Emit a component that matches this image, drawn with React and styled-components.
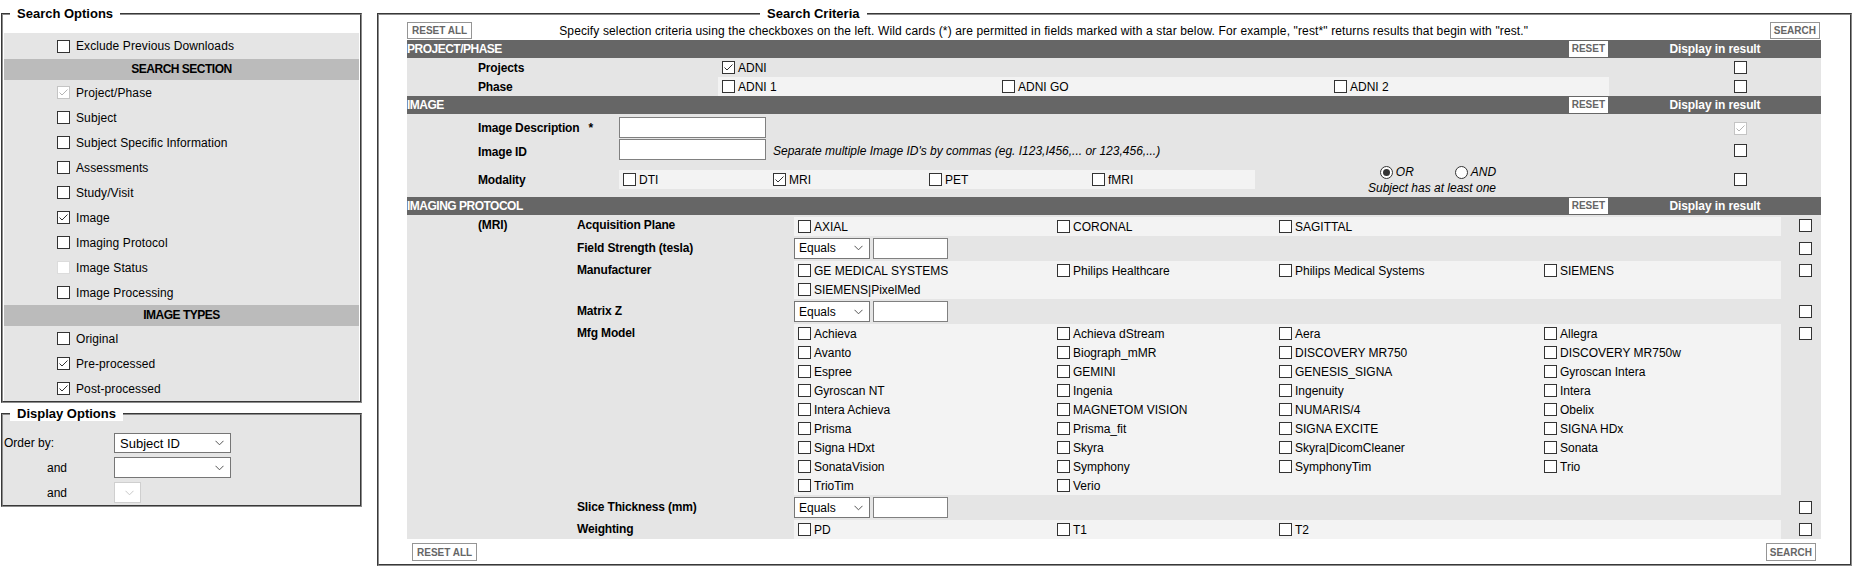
import React from "react";
import styled, { createGlobalStyle } from "styled-components";

const GlobalStyle = createGlobalStyle`
  html, body { margin: 0; padding: 0; background: #fff; }
  body {
    font-family: Arial, "Liberation Sans", sans-serif;
    font-size: 12px;
    color: #000;
  }
  * { box-sizing: border-box; }
`;

const Page = styled.div`
  display: flex;
  align-items: flex-start;
  gap: 15px;
  width: 1855px;
  padding: 6px 3px 0 1px;
`;

const LeftColumn = styled.div`
  flex: 0 0 361px;
  display: flex;
  flex-direction: column;
  gap: 3px;
`;

const Fieldset = styled.fieldset`
  margin: 0;
  min-width: 0;
  border: 2px groove #8c8c8c;
  padding: 0 1px;
  background: ${(p) => p.$bg || "#fff"};
`;

const RightFieldset = styled(Fieldset)`
  flex: 1 1 auto;
  padding: 0 29px 0 28px;
`;

const Legend = styled.legend`
  margin-left: ${(p) => p.$offset}px;
  padding: 0 7px;
  font-size: 13px;
  font-weight: bold;
  line-height: 15px;
  background: #fff;
`;

/* ---------- check boxes / radios / inputs ---------- */

const Box = styled.span`
  flex: 0 0 13px;
  width: 13px;
  height: 13px;
  display: inline-flex;
  align-items: center;
  justify-content: center;
  background: #fff;
  border: 1px solid ${(p) => (p.$disabled ? (p.$checked ? "#c4c4c4" : "#dcdcdc") : "#333")};
`;

function CheckBox({ checked, disabled }) {
  return (
    <Box $disabled={disabled} $checked={checked}>
      {checked && (
        <svg width="11" height="11" viewBox="0 0 11 11">
          <path
            d="M1.5 5.5 L4 8 L9.5 2.5"
            fill="none"
            stroke={disabled ? "#b4b4b4" : "#333"}
            strokeWidth="1"
          />
        </svg>
      )}
    </Box>
  );
}

const RadioRing = styled.span`
  width: 13px;
  height: 13px;
  border-radius: 50%;
  border: 1px solid #333;
  background: #fff;
  display: inline-flex;
  align-items: center;
  justify-content: center;
  &::after {
    content: "";
    width: 7px;
    height: 7px;
    border-radius: 50%;
    background: ${(p) => (p.$on ? "#333" : "transparent")};
  }
`;

const SelectBox = styled.div`
  width: ${(p) => p.$w}px;
  height: ${(p) => p.$h}px;
  flex: 0 0 auto;
  display: flex;
  align-items: center;
  justify-content: space-between;
  padding: 0 6px 0 ${(p) => p.$pl}px;
  background: #fff;
  border: 1px solid ${(p) => (p.$disabled ? "#cfcfcf" : "#767676")};
  font-size: ${(p) => p.$fs}px;
  color: #000;
`;

function Select({ value = "", w, h = 20, fs = 12, pl = 4, disabled }) {
  return (
    <SelectBox $w={w} $h={h} $fs={fs} $pl={pl} $disabled={disabled}>
      <span>{value}</span>
      <svg width="9" height="6" viewBox="0 0 9 6">
        <path d="M0.5 0.8 L4.5 4.8 L8.5 0.8" fill="none" stroke={disabled ? "#c8c8c8" : "#555"} strokeWidth="1" />
      </svg>
    </SelectBox>
  );
}

const TextInput = styled.div`
  width: ${(p) => p.$w}px;
  height: 21px;
  flex: 0 0 auto;
  background: #fff;
  border: 1px solid #808080;
  align-self: ${(p) => (p.$top ? "flex-start" : "auto")};
  margin-top: ${(p) => p.$mt || 0}px;
`;

/* ---------- left panel ---------- */

const OptionList = styled.div`
  margin-top: 12px;
  background: #e5e5e5;
  letter-spacing: 0.1px;
`;

const OptionRow = styled.div`
  height: ${(p) => p.$h || 25}px;
  display: flex;
  align-items: center;
  gap: 6px;
  padding-left: 53px;
`;

const GroupHeader = styled.div`
  height: 21px;
  line-height: 21px;
  background: #bbbbbb;
  text-align: center;
  font-weight: bold;
  letter-spacing: -0.5px;
`;

const DisplayGrid = styled.div`
  display: grid;
  grid-template-columns: 110px 1fr;
  grid-template-rows: 24px 25px 25px;
  align-items: center;
  padding-top: 10px;
`;

const OrderLabel = styled.span`
  padding-left: ${(p) => p.$indent || 0}px;
`;

/* ---------- right panel ---------- */

const TopBar = styled.div`
  height: 19px;
  display: flex;
  align-items: center;
`;

const Instructions = styled.span`
  margin-left: 87px;
  white-space: nowrap;
  letter-spacing: 0.13px;
`;

const Btn = styled.button`
  height: ${(p) => p.$h || 17}px;
  margin: 0;
  margin-left: ${(p) => (p.$right ? "auto" : "0")};
  margin-right: ${(p) => (p.$right ? "1px" : "0")};
  padding: 0 ${(p) => p.$px || 4}px;
  background: #fff;
  border: 1px solid #959595;
  color: #666;
  font: bold 10px Arial, "Liberation Sans", sans-serif;
  line-height: 15px;
  cursor: pointer;
`;

const Bar = styled.div`
  height: 18px;
  display: grid;
  grid-template-columns: 1fr auto 212px;
  align-items: center;
  background: #666666;
  color: #fff;
  font-weight: bold;
  font-size: 12px;
`;

const BarTitle = styled.span`
  letter-spacing: -0.5px;
`;

const BarReset = styled.span`
  height: 16px;
  line-height: 16px;
  margin-right: 1px;
  padding: 0 3px;
  background: #fff;
  color: #666;
  font-size: 10px;
  font-weight: bold;
`;

const BarDisplay = styled.span`
  text-align: center;
  letter-spacing: -0.1px;
`;

const SectionGrid = styled.div`
  display: grid;
  grid-template-columns: ${(p) => p.$cols};
  grid-template-rows: ${(p) => p.$rows};
  align-items: center;
  background: #e5e5e5;
`;

const Label = styled.span`
  font-weight: bold;
  padding-left: ${(p) => p.$indent || 0}px;
  padding-top: ${(p) => p.$pt || 0}px;
  white-space: nowrap;
  letter-spacing: -0.15px;
`;

const Star = styled.span`
  margin-left: 9px;
`;

const Cell = styled.div`
  align-self: stretch;
  display: flex;
  align-items: center;
  grid-column: ${(p) => p.$span || "auto"};
  background: ${(p) => (p.$light ? "#f3f3f3" : "transparent")};
`;

const ModalityCell = styled(Cell)`
  align-self: center;
  height: 19px;
`;

const DisplayCell = styled.div`
  display: flex;
  align-items: center;
  padding-left: ${(p) => p.$pl}px;
  margin-top: ${(p) => p.$mt || 0}px;
  height: 19px;
  align-self: ${(p) => (p.$top ? "start" : "center")};
`;

const ChoiceGrid = styled.div`
  display: grid;
  grid-template-columns: ${(p) => p.$cols};
  grid-auto-rows: 19px;
  align-items: center;
  padding-left: 4px;
  width: 100%;
`;

const Choice = styled.label`
  display: flex;
  align-items: center;
  gap: 3px;
  white-space: nowrap;
`;

const Hint = styled.span`
  margin-left: 7px;
  font-style: italic;
  white-space: nowrap;
`;

const RadioCell = styled.div`
  display: flex;
  flex-direction: column;
  align-items: center;
  font-style: italic;
  line-height: 16px;
  padding-top: 1px;
`;

const RadioLine = styled.div`
  display: flex;
  align-items: center;
  padding-left: 12px;
  gap: 41px;
`;

const RadioItem = styled.span`
  display: flex;
  align-items: center;
  gap: 3px;
`;

const ProtoRow = styled.div`
  display: grid;
  grid-template-columns: 170px 217px 987px 40px;
  height: ${(p) => p.$h}px;
  align-items: ${(p) => (p.$top ? "start" : "center")};
  background: #e5e5e5;
`;

const ProtoLabel = styled(Label)`
  line-height: 19px;
`;

const ProtoValue = styled.div`
  align-self: stretch;
  margin-top: ${(p) => p.$mt || 0}px;
  background: ${(p) => (p.$light ? "#f3f3f3" : "transparent")};
  display: flex;
  align-items: ${(p) => (p.$top ? "flex-start" : "center")};
  gap: 3px;
`;

const BottomBar = styled.div`
  height: 25px;
  display: flex;
  align-items: center;
  padding: 1px 4px 0 5px;
`;

/* ---------- data ---------- */

const searchSection = [
  { label: "Project/Phase", checked: true, disabled: true },
  { label: "Subject" },
  { label: "Subject Specific Information" },
  { label: "Assessments" },
  { label: "Study/Visit" },
  { label: "Image", checked: true },
  { label: "Imaging Protocol" },
  { label: "Image Status", disabled: true },
  { label: "Image Processing" },
];

const imageTypes = [
  { label: "Original" },
  { label: "Pre-processed", checked: true },
  { label: "Post-processed", checked: true },
];

const PROTO_COLS = "259px 222px 265px 1fr";

const manufacturers = [
  "GE MEDICAL SYSTEMS",
  "Philips Healthcare",
  "Philips Medical Systems",
  "SIEMENS",
  "SIEMENS|PixelMed",
];

const models = [
  "Achieva", "Achieva dStream", "Aera", "Allegra",
  "Avanto", "Biograph_mMR", "DISCOVERY MR750", "DISCOVERY MR750w",
  "Espree", "GEMINI", "GENESIS_SIGNA", "Gyroscan Intera",
  "Gyroscan NT", "Ingenia", "Ingenuity", "Intera",
  "Intera Achieva", "MAGNETOM VISION", "NUMARIS/4", "Obelix",
  "Prisma", "Prisma_fit", "SIGNA EXCITE", "SIGNA HDx",
  "Signa HDxt", "Skyra", "Skyra|DicomCleaner", "Sonata",
  "SonataVision", "Symphony", "SymphonyTim", "Trio",
  "TrioTim", "Verio",
];

function Choices({ items, cols, checked = [] }) {
  return (
    <ChoiceGrid $cols={cols}>
      {items.map((it) => (
        <Choice key={it}>
          <CheckBox checked={checked.includes(it)} />
          <span>{it}</span>
        </Choice>
      ))}
    </ChoiceGrid>
  );
}

function SectionBar({ title, reset }) {
  return (
    <Bar>
      <BarTitle>{title}</BarTitle>
      {reset ? <BarReset>RESET</BarReset> : <span />}
      {reset ? <BarDisplay>Display in result</BarDisplay> : <span />}
    </Bar>
  );
}

function ProtoLine({ h, top, mri, label, value, light, mt, valueTop }) {
  return (
    <ProtoRow $h={h} $top={top}>
      <ProtoLabel $indent={71}>{mri || ""}</ProtoLabel>
      <ProtoLabel>{label}</ProtoLabel>
      <ProtoValue $light={light} $mt={mt} $top={valueTop}>
        {value}
      </ProtoValue>
      <DisplayCell $pl={18} $top={top}>
        <CheckBox />
      </DisplayCell>
    </ProtoRow>
  );
}

function EqualsPair() {
  return (
    <>
      <Select value="Equals" w={76} h={21} fs={12} pl={4} />
      <TextInput $w={75} />
    </>
  );
}

export default function App() {
  return (
    <>
      <GlobalStyle />
      <Page>
        <LeftColumn>
          <Fieldset>
            <Legend $offset={6}>Search Options</Legend>
            <OptionList>
              <OptionRow $h={26}>
                <CheckBox />
                <span>Exclude Previous Downloads</span>
              </OptionRow>
              <GroupHeader>SEARCH SECTION</GroupHeader>
              {searchSection.map((o) => (
                <OptionRow key={o.label}>
                  <CheckBox checked={o.checked} disabled={o.disabled} />
                  <span>{o.label}</span>
                </OptionRow>
              ))}
              <GroupHeader>IMAGE TYPES</GroupHeader>
              {imageTypes.map((o) => (
                <OptionRow key={o.label}>
                  <CheckBox checked={o.checked} />
                  <span>{o.label}</span>
                </OptionRow>
              ))}
            </OptionList>
          </Fieldset>

          <Fieldset $bg="#e5e5e5">
            <Legend $offset={6}>Display Options</Legend>
            <DisplayGrid>
              <OrderLabel>Order by:</OrderLabel>
              <Select value="Subject ID" w={117} h={20} fs={13} pl={5} />
              <OrderLabel $indent={43}>and</OrderLabel>
              <Select w={117} h={21} fs={13} pl={5} />
              <OrderLabel $indent={43}>and</OrderLabel>
              <Select w={27} h={21} fs={13} pl={5} disabled />
            </DisplayGrid>
          </Fieldset>
        </LeftColumn>

        <RightFieldset>
          <Legend $offset={353}>Search Criteria</Legend>
          <TopBar>
            <Btn>RESET ALL</Btn>
            <Instructions>
              Specify selection criteria using the checkboxes on the left. Wild cards (*) are permitted in fields marked with a star below. For example, "rest*" returns results that begin with "rest."
            </Instructions>
            <Btn $right $px={3}>SEARCH</Btn>
          </TopBar>

          <SectionBar title="PROJECT/PHASE" reset />
          <SectionGrid $cols="311px 891px 212px" $rows="19px 19px">
            <Label $indent={71}>Projects</Label>
            <Cell>
              <ChoiceGrid $cols="1fr">
                <Choice>
                  <CheckBox checked />
                  <span>ADNI</span>
                </Choice>
              </ChoiceGrid>
            </Cell>
            <DisplayCell $pl={125}>
              <CheckBox />
            </DisplayCell>
            <Label $indent={71}>Phase</Label>
            <Cell $light>
              <Choices items={["ADNI 1", "ADNI GO", "ADNI 2"]} cols="280px 332px 1fr" />
            </Cell>
            <DisplayCell $pl={125}>
              <CheckBox />
            </DisplayCell>
          </SectionGrid>

          <SectionBar title="IMAGE" reset />
          <SectionGrid $cols="212px 636px 354px 212px" $rows="25px 23px 35px">
            <Label $indent={71} $pt={3}>
              Image Description<Star>*</Star>
            </Label>
            <Cell $span="2 / 4">
              <TextInput $w={147} $top $mt={3} />
            </Cell>
            <DisplayCell $pl={125} $mt={3}>
              <CheckBox checked disabled />
            </DisplayCell>

            <Label $indent={71} $pt={2}>Image ID</Label>
            <Cell $span="2 / 4">
              <TextInput $w={147} $top />
              <Hint>Separate multiple Image ID's by commas (eg. I123,I456,... or 123,456,...)</Hint>
            </Cell>
            <DisplayCell $pl={125}>
              <CheckBox />
            </DisplayCell>

            <Label $indent={71}>Modality</Label>
            <ModalityCell $light>
              <Choices items={["DTI", "MRI", "PET", "fMRI"]} cols="150px 156px 163px 1fr" checked={["MRI"]} />
            </ModalityCell>
            <RadioCell>
              <RadioLine>
                <RadioItem>
                  <RadioRing $on />
                  <span>OR</span>
                </RadioItem>
                <RadioItem>
                  <RadioRing />
                  <span>AND</span>
                </RadioItem>
              </RadioLine>
              <span>Subject has at least one</span>
            </RadioCell>
            <DisplayCell $pl={125}>
              <CheckBox />
            </DisplayCell>
          </SectionGrid>

          <SectionBar title="IMAGING PROTOCOL" reset />
          <ProtoLine
            h={20}
            mri="(MRI)"
            label="Acquisition Plane"
            light
            mt={2}
            value={<Choices items={["AXIAL", "CORONAL", "SAGITTAL"]} cols={PROTO_COLS} />}
          />
          <ProtoLine h={26} label="Field Strength (tesla)" value={<EqualsPair />} />
          <ProtoLine
            h={38}
            top
            label="Manufacturer"
            light
            valueTop
            value={<Choices items={manufacturers} cols={PROTO_COLS} />}
          />
          <ProtoLine h={25} label="Matrix Z" value={<EqualsPair />} />
          <ProtoLine
            h={171}
            top
            label="Mfg Model"
            light
            valueTop
            value={<Choices items={models} cols={PROTO_COLS} />}
          />
          <ProtoLine h={25} label="Slice Thickness (mm)" value={<EqualsPair />} />
          <ProtoLine
            h={19}
            top
            label="Weighting"
            light
            valueTop
            value={<Choices items={["PD", "T1", "T2"]} cols={PROTO_COLS} />}
          />

          <BottomBar>
            <Btn $h={18}>RESET ALL</Btn>
            <Btn $h={18} $right $px={3}>SEARCH</Btn>
          </BottomBar>
        </RightFieldset>
      </Page>
    </>
  );
}
